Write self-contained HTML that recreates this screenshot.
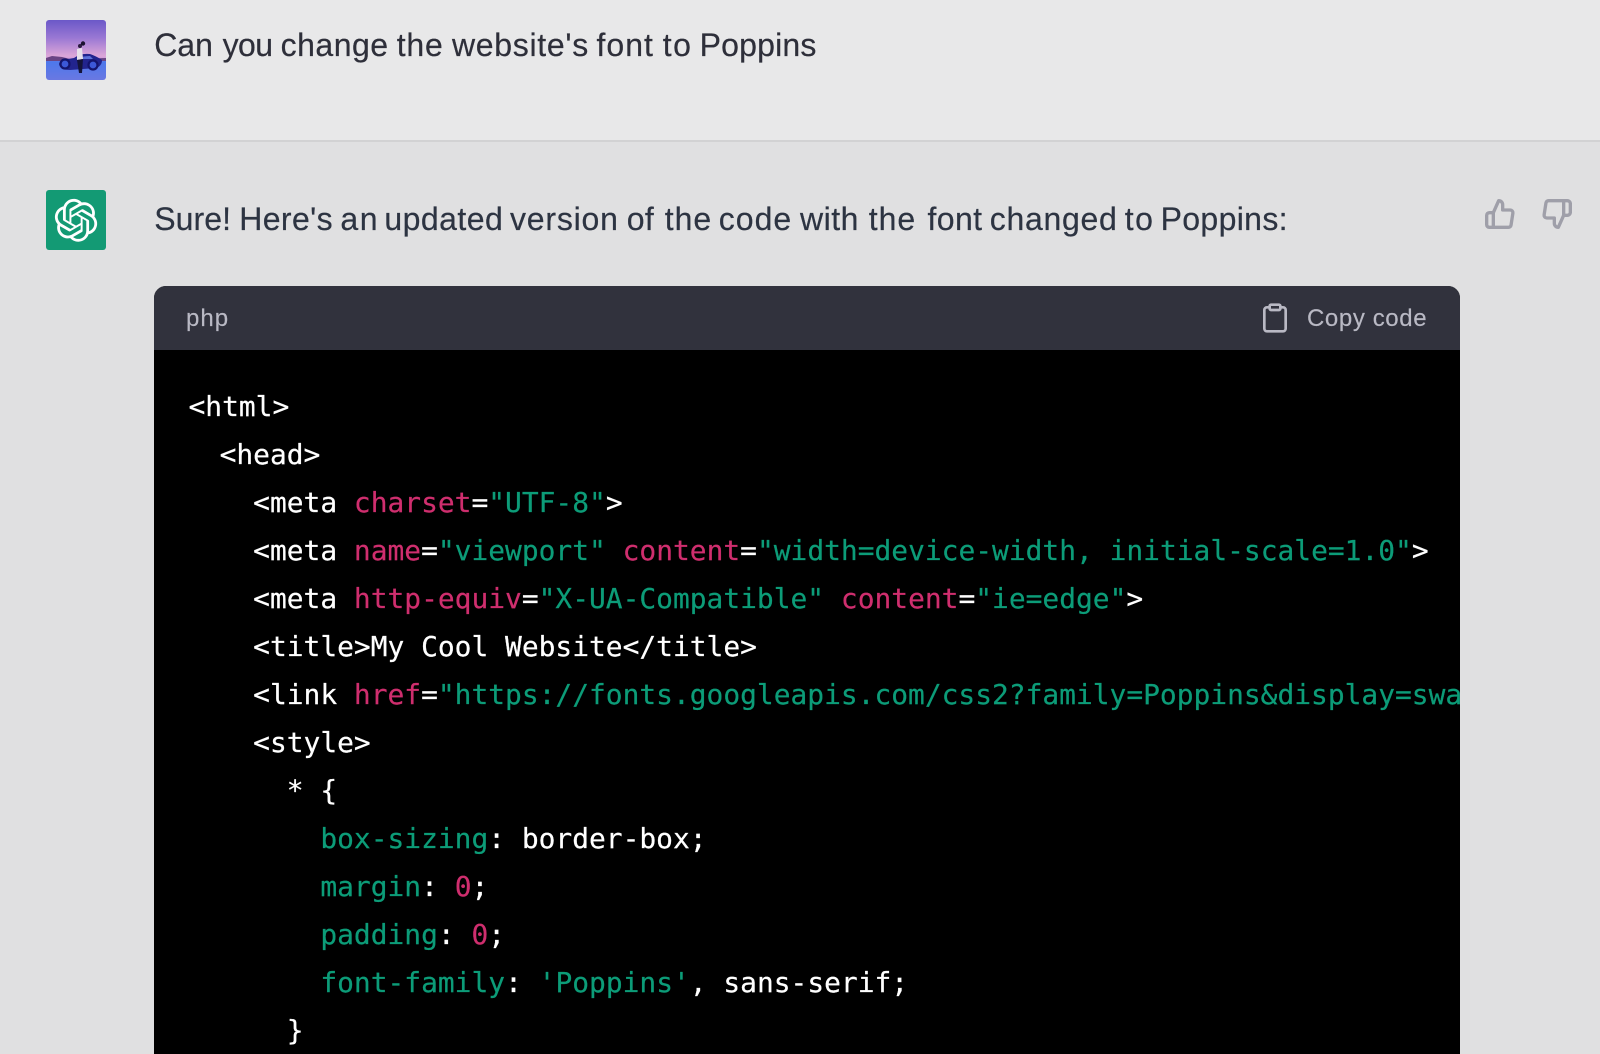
<!DOCTYPE html>
<html lang="en">
<head>
<meta charset="utf-8">
<title>Can you change the website's font to Poppins</title>
<style>
*{box-sizing:border-box;margin:0;padding:0}
html,body{width:1600px;height:1054px;overflow:hidden;background:#e0e0e1}
body{position:relative;font-family:"Liberation Sans",sans-serif}
.top{position:absolute;left:0;top:0;width:1600px;height:142px;background:#e8e8e9;border-bottom:2px solid #d2d2d3}
.msg{position:absolute;left:0;width:1400px;height:40px;font-size:32px;line-height:40px;white-space:nowrap;-webkit-text-stroke:.2px currentColor}
.msg span{position:absolute;top:0}
.av{position:absolute;left:46px;width:60px;height:60px;border-radius:3px;display:block}
.ic{position:absolute;width:32px;height:32px;fill:none;stroke-width:2;stroke-linecap:round;stroke-linejoin:round}
.code{position:absolute;left:154px;top:286px;width:1306px;height:768px;border-radius:12px 12px 0 0;background:#000;overflow:hidden}
.head{position:absolute;left:0;top:0;width:1306px;height:64px;background:#31323d}
.head span{position:absolute;top:18px;font-size:24px;line-height:30px;color:#b9b9c4;white-space:nowrap;-webkit-text-stroke:.15px currentColor}
pre{position:absolute;left:32px;top:96.5px;font-family:"DejaVu Sans Mono","Liberation Mono",monospace;font-size:27.9px;line-height:48px;color:#fff;white-space:pre;-webkit-text-stroke:.2px currentColor}
.g{color:#0c9c78}
.p{color:#cf2e6e}
</style>
</head>
<body>
<div class="top"></div>

<svg class="av" style="top:20px" viewBox="0 0 60 60">
<defs>
<linearGradient id="sky" x1="0" y1="0" x2="0" y2="1">
<stop offset="0" stop-color="#6b58c8"/><stop offset=".3" stop-color="#9a78d4"/><stop offset=".6" stop-color="#dca6d8"/><stop offset=".66" stop-color="#c898dc"/><stop offset=".69" stop-color="#4c78ec"/><stop offset="1" stop-color="#6a78e2"/>
</linearGradient>
</defs>
<rect width="60" height="60" fill="url(#sky)"/>
<path d="M0 38 L6 36 L16 37 L24 39 L60 38 V41 H0Z" fill="#6a4484"/>
<path d="M13 44 Q14 40 22 39 L28 38 Q34 33 44 34 Q50 36 56 40 Q56 46 50 48 L24 50 Q14 50 13 44Z" fill="#22248e"/>
<path d="M30 39 Q36 36 44 36 L47 39Z" fill="#5a70d8"/>
<circle cx="19" cy="44" r="4.5" fill="#3c58d8" stroke="#14146e" stroke-width="2.2"/>
<circle cx="47" cy="45" r="4.5" fill="#3c58d8" stroke="#14146e" stroke-width="2.2"/>
<path d="M31 29 L36 28 L37 39 L31 40Z" fill="#e6e0ea"/>
<path d="M31 40 L37 39 L36 53 L33 53Z" fill="#14143a"/>
<circle cx="34" cy="26" r="2" fill="#2a1a40"/>
<circle cx="37" cy="23.5" r="2.2" fill="#1c1230"/>
</svg>
<div class="msg" style="top:25px;color:#2e2f3a"><span style="left:154.2px">Can</span> <span style="left:222.6px;letter-spacing:-.6px">you</span> <span style="left:280.6px;letter-spacing:.5px">change</span> <span style="left:396.7px;letter-spacing:.8px">the</span> <span style="left:452px;letter-spacing:.7px">website's</span> <span style="left:596.5px;letter-spacing:1px">font</span> <span style="left:662.7px;letter-spacing:1.5px">to</span> <span style="left:699.6px;letter-spacing:.2px">Poppins</span></div>

<svg class="av" style="top:190px" viewBox="0 0 60 60">
<rect width="60" height="60" fill="#139a74"/>
<g transform="translate(8.2 8.4) scale(1.07)">
<path fill="#fff" d="M37.5324 16.8707C37.9808 15.5241 38.1363 14.0974 37.9886 12.6859C37.8409 11.2744 37.3934 9.91076 36.676 8.68622C35.6126 6.83404 33.9882 5.3676 32.0373 4.4985C30.0864 3.62941 27.9098 3.40259 25.8215 3.85078C24.8796 2.7893 23.7219 1.94125 22.4257 1.36341C21.1295 0.785575 19.7249 0.491269 18.3058 0.500197C16.1708 0.495044 14.0893 1.16803 12.3614 2.42214C10.6335 3.67624 9.34853 5.44666 8.6917 7.47815C7.30085 7.76286 5.98686 8.3414 4.8377 9.17505C3.68854 10.0087 2.73073 11.0782 2.02839 12.312C0.956464 14.1591 0.498905 16.2988 0.721698 18.4228C0.944492 20.5467 1.83612 22.5449 3.268 24.1293C2.81966 25.4759 2.66413 26.9026 2.81182 28.3141C2.95951 29.7256 3.40701 31.0892 4.12437 32.3138C5.18791 34.1659 6.8123 35.6322 8.76321 36.5013C10.7141 37.3704 12.8907 37.5973 14.9789 37.1492C15.9208 38.2107 17.0786 39.0587 18.3747 39.6366C19.6709 40.2144 21.0755 40.5087 22.4946 40.4998C24.6307 40.5054 26.7133 39.8321 28.4418 38.5772C30.1704 37.3223 31.4556 35.5506 32.1119 33.5179C33.5027 33.2332 34.8167 32.6547 35.9659 31.821C37.115 30.9874 38.0728 29.9178 38.7752 28.684C39.8458 26.8371 40.3023 24.6979 40.0789 22.5748C39.8556 20.4517 38.9639 18.4544 37.5324 16.8707ZM22.4978 37.8849C20.7443 37.8874 19.0459 37.2733 17.6994 36.1501C17.7601 36.117 17.8666 36.0586 17.936 36.0161L25.9004 31.4156C26.1003 31.3019 26.2663 31.137 26.3813 30.9378C26.4964 30.7386 26.5563 30.5124 26.5549 30.2825V19.0542L29.9213 20.998C29.9389 21.0068 29.9541 21.0198 29.9656 21.0359C29.977 21.052 29.9842 21.0707 29.9867 21.0902V30.3889C29.9842 32.375 29.1946 34.2791 27.7909 35.6841C26.3872 37.0892 24.4838 37.8806 22.4978 37.8849ZM6.39227 31.0064C5.51397 29.4888 5.19742 27.7107 5.49804 25.9832C5.55718 26.0187 5.66048 26.0818 5.73461 26.1244L13.699 30.7248C13.8975 30.8408 14.1233 30.902 14.3532 30.902C14.583 30.902 14.8088 30.8408 15.0073 30.7248L24.731 25.1103V28.9979C24.7321 29.0177 24.7283 29.0376 24.7199 29.0556C24.7115 29.0736 24.6988 29.0893 24.6829 29.1012L16.6317 33.7497C14.9096 34.7416 12.8643 35.0097 10.9447 34.4954C9.02506 33.9811 7.38785 32.7263 6.39227 31.0064ZM4.29707 13.6194C5.17156 12.0998 6.55279 10.9364 8.19885 10.3327C8.19885 10.4013 8.19491 10.5228 8.19491 10.6071V19.808C8.19351 20.0378 8.25334 20.2638 8.36823 20.4629C8.48312 20.6619 8.64893 20.8267 8.84863 20.9404L18.5723 26.5542L15.206 28.4979C15.1894 28.5089 15.1703 28.5155 15.1505 28.5173C15.1307 28.5191 15.1107 28.516 15.0924 28.5082L7.04046 23.8557C5.32135 22.8601 4.06716 21.2235 3.55289 19.3046C3.03862 17.3858 3.30624 15.3413 4.29707 13.6194ZM31.955 20.0556L22.2312 14.4411L25.5976 12.4981C25.6142 12.4872 25.6333 12.4805 25.6531 12.4787C25.6729 12.4769 25.6928 12.4801 25.7111 12.4879L33.7631 17.1364C34.9967 17.849 36.0017 18.8982 36.6606 20.1613C37.3194 21.4244 37.6047 22.849 37.4832 24.2684C37.3617 25.6878 36.8382 27.0432 35.9743 28.1759C35.1103 29.3086 33.9415 30.1717 32.6047 30.6641C32.6047 30.5947 32.6047 30.4733 32.6047 30.3889V21.188C32.6066 20.9586 32.5474 20.7328 32.4332 20.5338C32.319 20.3348 32.154 20.1698 31.955 20.0556ZM35.3055 15.0128C35.2464 14.9765 35.1431 14.9142 35.069 14.8717L27.1045 10.2712C26.906 10.1554 26.6803 10.0943 26.4504 10.0943C26.2206 10.0943 25.9948 10.1554 25.7963 10.2712L16.0726 15.8858V11.9982C16.0715 11.9783 16.0753 11.9585 16.0837 11.9405C16.0921 11.9225 16.1048 11.9068 16.1207 11.8949L24.1719 7.25025C25.4053 6.53903 26.8158 6.19376 28.2383 6.25482C29.6608 6.31589 31.0364 6.78077 32.2044 7.59508C33.3723 8.40939 34.2842 9.53945 34.8334 10.8531C35.3826 12.1667 35.5464 13.6095 35.3055 15.0128ZM14.2424 21.9419L10.8752 19.9981C10.8576 19.9893 10.8423 19.9763 10.8309 19.9602C10.8195 19.9441 10.8122 19.9254 10.8098 19.9058V10.6071C10.8107 9.18295 11.2173 7.78848 11.9819 6.58696C12.7466 5.38544 13.8377 4.42659 15.1275 3.82264C16.4173 3.21869 17.8524 2.99464 19.2649 3.1767C20.6775 3.35876 22.0089 3.93941 23.1034 4.85067C23.0427 4.88379 22.937 4.94215 22.8668 4.98473L14.9024 9.58517C14.7025 9.69878 14.5366 9.86356 14.4215 10.0626C14.3065 10.2616 14.2466 10.4877 14.2479 10.7175L14.2424 21.9419ZM16.071 17.9991L20.4018 15.4978L24.7325 17.9975V22.9985L20.4018 25.4983L16.071 22.9985V17.9991Z"/>
</g>
</svg>
<div class="msg" style="top:199px;color:#2d3442"><span style="left:154.2px;letter-spacing:.1px">Sure!</span> <span style="left:239.2px;letter-spacing:.4px">Here's</span> <span style="left:340.4px;letter-spacing:1.5px">an</span> <span style="left:384.4px;letter-spacing:.45px">updated</span> <span style="left:510px;letter-spacing:.8px">version</span> <span style="left:626.8px;letter-spacing:.3px">of</span> <span style="left:664.7px;letter-spacing:1px">the</span> <span style="left:718.8px;letter-spacing:1px">code</span> <span style="left:800px;letter-spacing:.5px">with</span> <span style="left:868.7px;letter-spacing:1px">the</span> <span style="left:927.5px;letter-spacing:.4px">font</span> <span style="left:989.8px;letter-spacing:.7px">changed</span> <span style="left:1124.7px;letter-spacing:1.5px">to</span> <span style="left:1160.6px;letter-spacing:.35px">Poppins:</span></div>

<svg class="ic" style="left:1483.5px;top:198px;stroke:#9f9fa9;stroke-width:2.5" viewBox="0 0 24 24"><path d="M14 9V5a3 3 0 0 0-3-3l-4 9v11h11.28a2 2 0 0 0 2-1.7l1.38-9a2 2 0 0 0-2-2.3zM7 22H4a2 2 0 0 1-2-2v-7a2 2 0 0 1 2-2h3"/></svg>
<svg class="ic" style="left:1540.5px;top:198px;stroke:#9f9fa9;stroke-width:2.5" viewBox="0 0 24 24"><path d="M10 15v4a3 3 0 0 0 3 3l4-9V2H5.72a2 2 0 0 0-2 1.7l-1.38 9a2 2 0 0 0 2 2.3zm7-13h2.67A2.31 2.31 0 0 1 22 4v7a2.31 2.31 0 0 1-2.33 2H17"/></svg>

<div class="code">
<div class="head">
<span style="left:32px;letter-spacing:1px">php</span>
<svg class="ic" style="left:1105px;top:16px;stroke:#b9b9c4" viewBox="0 0 24 24"><path d="M16 4h2a2 2 0 0 1 2 2v14a2 2 0 0 1-2 2H6a2 2 0 0 1-2-2V6a2 2 0 0 1 2-2h2"/><rect x="8" y="2" width="8" height="4" rx="1"/></svg>
<span style="left:1153px;letter-spacing:.6px">Copy code</span>
</div>
<pre><span style="position:relative;left:2.5px">&lt;html&gt;</span>
  &lt;head&gt;
    &lt;meta <span class="p">charset</span>=<span class="g">"UTF-8"</span>&gt;
    &lt;meta <span class="p">name</span>=<span class="g">"viewport"</span> <span class="p">content</span>=<span class="g">"width=device-width, initial-scale=1.0"</span>&gt;
    &lt;meta <span class="p">http-equiv</span>=<span class="g">"X-UA-Compatible"</span> <span class="p">content</span>=<span class="g">"ie=edge"</span>&gt;
    &lt;title&gt;My Cool Website&lt;/title&gt;
    &lt;link <span class="p">href</span>=<span class="g">"https://fonts.googleapis.com/css2?family=Poppins&amp;display=swap"</span> <span class="p">rel</span>=<span class="g">"stylesheet"</span>&gt;
    &lt;style&gt;
      * {
        <span class="g">box-sizing</span>: border-box;
        <span class="g">margin</span>: <span class="p">0</span>;
        <span class="g">padding</span>: <span class="p">0</span>;
        <span class="g">font-family</span>: <span class="g">'Poppins'</span>, sans-serif;
      }</pre>
</div>
</body>
</html>
